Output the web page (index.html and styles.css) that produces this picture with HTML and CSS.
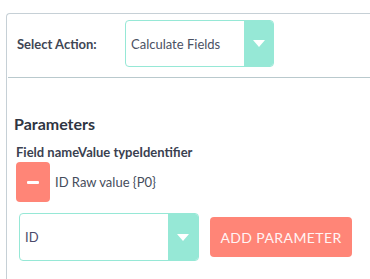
FILE: index.html
```html
<!DOCTYPE html>
<html>
<head>
<meta charset="utf-8">
<link rel="stylesheet" href="styles.css">
</head>
<body>
<div class="panel">
  <div class="action-row">
    <label class="action-label">Select Action:</label>
    <div class="select select-action">
      <span class="select-value">Calculate Fields</span>
      <span class="select-arrow"><span class="tri"></span></span>
    </div>
  </div>
  <div class="divider"></div>
  <div class="params">
    <h3 class="params-title">Parameters</h3>
    <div class="params-head"><span>Field name</span><span>Value type</span><span>Identifier</span></div>
    <div class="param-row">
      <button class="btn-remove"><span class="minus"></span></button>
      <span class="param-text">ID Raw value {P0}</span>
    </div>
    <div class="add-row">
      <div class="select select-field">
        <span class="select-value">ID</span>
        <span class="select-arrow"><span class="tri"></span></span>
      </div>
      <button class="btn-add">ADD PARAMETER</button>
    </div>
  </div>
</div>
</body>
</html>
```
FILE: styles.css
```css
html, body {
  margin: 0;
  padding: 0;
  background: #fff;
  overflow: hidden;
  height: 279px;
}
body {
  box-sizing: border-box;
  font-family: Lato, "Open Sans", sans-serif;
  color: #3b4250;
  padding: 13px 0 0 6px;
}
.panel {
  box-sizing: border-box;
  width: 364px;
  height: 266px;
  border-top: 1px solid #c6d0d6;
  border-left: 1px solid #c6d0d6;
  border-radius: 4px 0 0 0;
}
.action-row {
  display: flex;
  align-items: center;
  padding: 6px 0 0 10px;
}
.action-label {
  font-weight: bold;
  font-size: 13px;
  color: #3f4654;
  width: 108px;
}
.select {
  display: flex;
  box-sizing: border-box;
  border: 1px solid #96e8d6;
  border-radius: 4px;
  background: #fff;
  overflow: hidden;
}
.select-action {
  width: 149px;
  height: 47px;
}
.select-value {
  flex: 1;
  display: flex;
  align-items: center;
  padding-left: 5px;
  font-size: 13px;
  color: #4a5163;
}
.select-arrow {
  width: 29px;
  background: #96e8d6;
  display: flex;
  align-items: center;
  justify-content: center;
}
.tri {
  width: 0;
  height: 0;
  border-left: 6px solid transparent;
  border-right: 6px solid transparent;
  border-top: 7px solid #fff;
}
.divider {
  margin: 10px 0 0 1px;
  height: 1px;
  background: #b9c9cd;
}
.params {
  padding: 36px 0 0 7px;
}
.params-title {
  margin: 0;
  font-size: 16px;
  font-weight: bold;
  color: #2f3542;
  line-height: 20px;
}
.params-head {
  margin: 10px 0 0 2px;
  font-size: 13px;
  font-weight: bold;
  color: #3a4150;
  line-height: 16px;
}
.param-row {
  display: flex;
  align-items: center;
  margin: 2px 0 0 2px;
}
.btn-remove {
  width: 34px;
  height: 40px;
  border: none;
  border-radius: 4px;
  background: #ff8577;
  display: flex;
  align-items: center;
  justify-content: center;
  padding: 0;
}
.minus {
  width: 12px;
  height: 3px;
  background: #fff;
  border-radius: 1px;
}
.param-text {
  margin-left: 5px;
  font-size: 13px;
  color: #454c5b;
}
.add-row {
  display: flex;
  align-items: center;
  margin: 11px 0 0 5px;
}
.select-field {
  width: 180px;
  height: 48px;
}
.select-field .select-value {
  color: #4a4a6a;
}
.select-field .select-arrow {
  width: 30px;
}
.btn-add {
  margin-left: 11px;
  width: 142px;
  height: 40px;
  border: none;
  border-radius: 4px;
  background: #ff8577;
  color: #fff4f4;
  font-family: Lato, sans-serif;
  font-size: 14px;
  letter-spacing: 0.4px;
  padding: 0;
}
```
